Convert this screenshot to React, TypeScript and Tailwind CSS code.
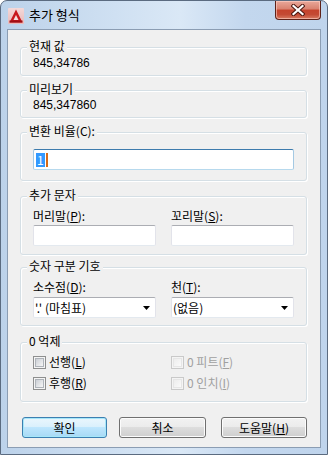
import React from "react";

function Group({ label, cls, children }: { label: string; cls: string; children?: React.ReactNode }) {
  return (
    <div className={"relative ml-[12px] w-[287px] rounded-[3px] border border-[#d5dfe5] shadow-[inset_1px_1px_0_#ffffff,1px_1px_0_#ffffff] " + cls}>
      <span className="absolute left-[6px] top-[-8px] bg-[#f0f0f0] px-[2px] text-[12px] leading-[12px] text-black">{label}</span>
      {children}
    </div>
  );
}

function TextBox({ cls, children, focused }: { cls: string; children?: React.ReactNode; focused?: boolean }) {
  return (
    <div
      className={
        "h-[21px] rounded-[2px] border bg-white " +
        (focused
          ? "border-[#a4c9e3] border-t-[#3d7bad] border-b-[#b7d9ed] "
          : "border-[#e2e3ea] border-t-[#abadb3] border-b-[#e3e9ef] ") +
        cls
      }
    >
      {children}
    </div>
  );
}

function Combo({ text, cls }: { text: string; cls: string }) {
  return (
    <div className={"flex h-[21px] items-center justify-between rounded-[2px] border border-[#e2e3ea] border-t-[#abadb3] border-b-[#e3e9ef] bg-white pl-[1px] pr-[5px] " + cls}>
      <span className="text-[12px] leading-[14px] text-black">{text}</span>
      <svg width="7" height="4" viewBox="0 0 7 4">
        <path d="M0 0 H7 L3.5 4 Z" fill="#000" />
      </svg>
    </div>
  );
}

function Check({ label, disabled }: { label: React.ReactNode; disabled?: boolean }) {
  return (
    <div className="flex h-[14px] items-center">
      <div
        className={
          "flex h-[13px] w-[13px] items-center justify-center border " +
          (disabled ? "border-[#c9c9c9] bg-[#f4f4f4]" : "border-[#8e8f8f] bg-[#f4f4f4]")
        }
      >
        <div
          className={
            "h-[9px] w-[9px] border " +
            (disabled
              ? "border-[#e6e6e6] bg-[linear-gradient(135deg,#ededed,#fafafa)]"
              : "border-[#aeb3b9] bg-[linear-gradient(135deg,#cbcfd5,#f6f6f6)]")
          }
        />
      </div>
      <span className={"ml-[3px] text-[12px] leading-[14px] " + (disabled ? "text-[#a0a0a0]" : "text-black")}>{label}</span>
    </div>
  );
}

function Button({ children, cls, def }: { children: React.ReactNode; cls: string; def?: boolean }) {
  return (
    <div
      className={
        "flex h-[21px] items-center justify-center rounded-[3px] border text-[12px] leading-[14px] text-black " +
        (def
          ? "border-[#3c7fb1] bg-[linear-gradient(to_bottom,#eaf6fd_0%,#d9f0fc_50%,#bee6fd_50%,#a7d9f5_100%)] shadow-[inset_0_0_0_1px_#a6e7f9] "
          : "border-[#707070] bg-[linear-gradient(to_bottom,#f2f2f2_0%,#ebebeb_50%,#dddddd_50%,#cfcfcf_100%)] shadow-[inset_0_0_0_1px_#fcfcfc] ") +
        cls
      }
    >
      {children}
    </div>
  );
}

export default function App() {
  return (
    <div className="relative h-[455px] w-[328px] overflow-hidden rounded-t-[7px] border border-[#5b6b80] bg-[linear-gradient(to_right,#bcd2ea_0%,#cfe0f2_35%,#dae8f6_55%,#c3d7ee_75%,#bfd4ec_100%)] font-['Noto_Sans_CJK_KR','Noto_Sans',sans-serif]">
      {/* title bar */}
      <div className="flex h-[28px] items-center pl-[7px]">
        <svg width="16" height="16" viewBox="0 0 16 16" className="mt-[1px]">
          <defs>
            <linearGradient id="ag" x1="0" y1="0" x2="0" y2="1">
              <stop offset="0" stopColor="#f4d9d9" />
              <stop offset="1" stopColor="#e9b9b9" />
            </linearGradient>
          </defs>
          <rect x="0" y="0" width="16" height="16" rx="1" fill="url(#ag)" />
          <path d="M8 1.5 L14.5 14.5 H1.5 Z" fill="#c8171d" />
          <path d="M8 7 L10.5 12 H5.5 Z" fill="#f5dede" />
          <rect x="1.5" y="12.5" width="13" height="2" fill="#9e0f14" />
        </svg>
        <span className="ml-[5px] text-[13px] leading-[16px] text-black">추가 형식</span>
      </div>
      {/* close button */}
      <div className="absolute right-[6px] top-0 flex h-[19px] w-[46px] items-center justify-center rounded-b-[4px] border border-t-0 border-[#5e2219] bg-[linear-gradient(to_bottom,#e9a89a_0%,#d9816f_45%,#c5432c_50%,#c44a34_75%,#d77b62_100%)] shadow-[inset_0_0_0_1px_rgba(255,210,200,0.6)]">
        <svg width="14" height="12" viewBox="0 0 14 12">
          <path d="M2.5 2 L11.5 10 M11.5 2 L2.5 10" stroke="#4a1710" strokeWidth="4.2" strokeLinecap="square" />
          <path d="M2.5 2 L11.5 10 M11.5 2 L2.5 10" stroke="#ffffff" strokeWidth="2.2" strokeLinecap="square" />
        </svg>
      </div>
      {/* client */}
      <div className="ml-[6px] h-[419px] w-[314px] border border-[#8b9db3] bg-[#f0f0f0] text-[12px] text-black">
        <div className="flex flex-col">
          <Group label="현재 값" cls="mt-[17px] h-[29px]">
            <div className="pl-[12px] pt-[8px] font-['Liberation_Sans','Noto_Sans_CJK_KR',sans-serif] leading-[14px]">845,34786</div>
          </Group>
          <Group label="미리보기" cls="mt-[14px] h-[28px]">
            <div className="pl-[12px] pt-[7px] font-['Liberation_Sans','Noto_Sans_CJK_KR',sans-serif] leading-[14px]">845,347860</div>
          </Group>
          <Group label="변환 비율(C):" cls="mt-[14px] h-[49px]">
            <div className="pl-[12px] pt-[16px]">
              <TextBox focused cls="w-[261px] flex items-center pl-[2px]">
                <span className="bg-[#3399ff] px-[1px] text-[12px] leading-[14px] text-white">1</span>
                <span className="ml-[1px] h-[14px] w-[2px] bg-[#d86a17]" />
              </TextBox>
            </div>
          </Group>
          <Group label="추가 문자" cls="mt-[15px] h-[59px]">
            <div className="flex pl-[12px] pt-[12px]">
              <div className="flex w-[138px] flex-col">
                <span className="leading-[14px]">머리말(<u>P</u>):</span>
                <TextBox cls="mt-[2px] w-[123px]" />
              </div>
              <div className="flex w-[123px] flex-col">
                <span className="leading-[14px]">꼬리말(<u>S</u>):</span>
                <TextBox cls="mt-[2px] w-[123px]" />
              </div>
            </div>
          </Group>
          <Group label="숫자 구분 기호" cls="mt-[12px] h-[59px]">
            <div className="flex pl-[12px] pt-[12px]">
              <div className="flex w-[138px] flex-col">
                <span className="leading-[14px]">소수점(<u>D</u>):</span>
                <Combo text="'.' (마침표)" cls="mt-[3px] w-[123px]" />
              </div>
              <div className="flex w-[123px] flex-col">
                <span className="leading-[14px]">천(<u>T</u>):</span>
                <Combo text="(없음)" cls="mt-[3px] w-[123px]" />
              </div>
            </div>
          </Group>
          <Group label="0 억제" cls="mt-[16px] h-[60px]">
            <div className="flex pl-[12px] pt-[12px]">
              <div className="flex w-[138px] flex-col gap-[7px]">
                <Check label={<>선행(<u>L</u>)</>} />
                <Check label={<>후행(<u>R</u>)</>} />
              </div>
              <div className="flex flex-col gap-[7px]">
                <Check disabled label={<>0 피트(<u>F</u>)</>} />
                <Check disabled label={<>0 인치(<u>I</u>)</>} />
              </div>
            </div>
          </Group>
          <div className="ml-[14px] mt-[15px] flex">
            <Button def cls="w-[85px]">확인</Button>
            <Button cls="ml-[12px] w-[87px]">취소</Button>
            <Button cls="ml-[15px] w-[86px]">
              <span>도움말(<u>H</u>)</span>
            </Button>
          </div>
        </div>
      </div>
    </div>
  );
}
